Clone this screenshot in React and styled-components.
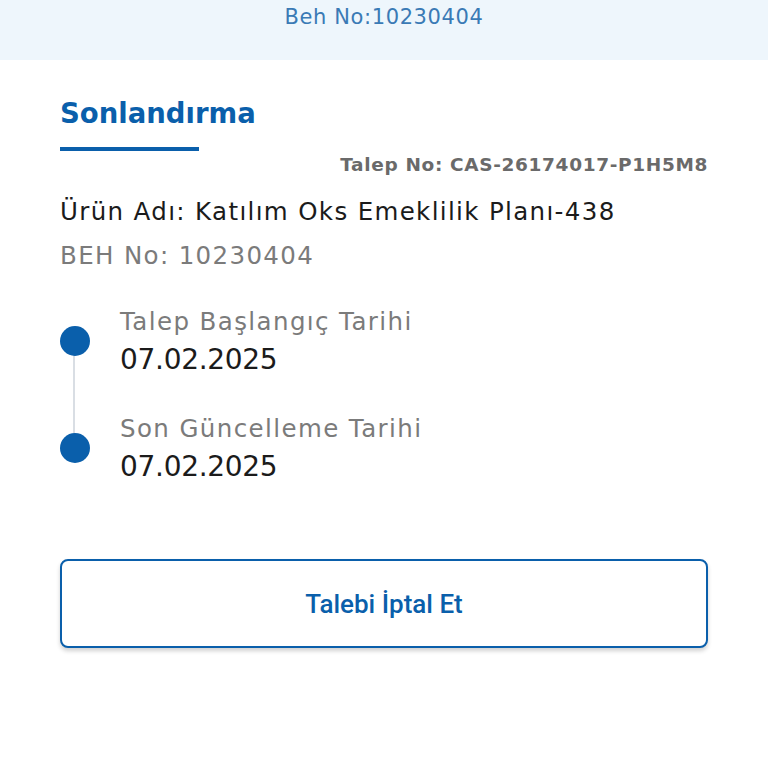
import React from 'react';
import styled, { createGlobalStyle } from 'styled-components';

const colors = {
    primary: '#0a5fab',
    headerBg: '#eef6fc',
    headerText: '#3a7ab5',
    text: '#1b1b1b',
    muted: '#7b7b7b',
    line: '#d9dee4',
};

const GlobalStyle = createGlobalStyle`
    html, body {
        margin: 0;
        padding: 0;
        background: #ffffff;
        font-family: "DejaVu Sans", "Noto Sans", sans-serif;
    }
`;

const Page = styled.div`
    width: 768px;
    height: 768px;
    overflow: hidden;
    background: #ffffff;
`;

const Header = styled.header`
    height: 60px;
    background: ${colors.headerBg};
    display: flex;
    justify-content: center;
    align-items: flex-start;
`;

const HeaderText = styled.span`
    margin-top: 3px;
    color: ${colors.headerText};
    font-size: 21px;
    letter-spacing: 0.6px;
    line-height: 28px;
`;

const Content = styled.main`
    padding: 34px 60px 0;
    display: flex;
    flex-direction: column;
`;

const Title = styled.h1`
    margin: 0;
    color: ${colors.primary};
    font-size: 27.5px;
    font-weight: 600;
    line-height: 38px;
`;

const TitleBar = styled.div`
    width: 139px;
    height: 4px;
    margin-top: 15px;
    background: ${colors.primary};
`;

const CaseNo = styled.div`
    align-self: flex-end;
    margin-top: 1px;
    color: #6a6a6a;
    font-size: 18.5px;
    font-weight: 600;
    letter-spacing: 0.65px;
    line-height: 26px;
`;

const InfoLine = styled.div`
    color: ${({ $muted }) => ($muted ? colors.muted : colors.text)};
    font-size: 24.5px;
    letter-spacing: 1.35px;
    line-height: 44px;
`;

const Products = styled.div`
    margin-top: 12px;
`;

const Timeline = styled.ul`
    list-style: none;
    margin: 26px 0 0;
    padding: 0;
    position: relative;
`;

const Step = styled.li`
    display: flex;
    align-items: center;
    gap: 30px;
    position: relative;
    margin-bottom: ${({ $last }) => ($last ? '0' : '31px')};

    &::after {
        content: '';
        display: ${({ $last }) => ($last ? 'none' : 'block')};
        position: absolute;
        left: 13px;
        top: 50%;
        width: 2px;
        height: 107px;
        background: ${colors.line};
    }
`;

const Dot = styled.span`
    flex: none;
    width: 30px;
    height: 30px;
    border-radius: 50%;
    background: ${colors.primary};
    position: relative;
    z-index: 1;
    margin-top: -2px;
`;

const StepText = styled.div`
    display: flex;
    flex-direction: column;
`;

const StepLabel = styled.span`
    color: ${colors.muted};
    font-size: 24.5px;
    letter-spacing: 1.4px;
    line-height: 36px;
`;

const StepDate = styled.span`
    color: ${colors.text};
    font-size: 28px;
    letter-spacing: -0.3px;
    line-height: 40px;
`;

const CancelButton = styled.button`
    margin-top: 72px;
    height: 89px;
    border: 2px solid ${colors.primary};
    border-radius: 8px;
    background: #ffffff;
    box-shadow: 0 3px 4px rgba(0, 0, 0, 0.18);
    color: ${colors.primary};
    font-family: Roboto, "Liberation Sans", sans-serif;
    font-size: 26px;
    font-weight: 500;
    cursor: pointer;
`;

const steps = [
    { label: 'Talep Başlangıç Tarihi', date: '07.02.2025' },
    { label: 'Son Güncelleme Tarihi', date: '07.02.2025' },
];

function App() {
    return (
        <Page>
            <GlobalStyle />
            <Header>
                <HeaderText>Beh No:10230404</HeaderText>
            </Header>
            <Content>
                <Title>Sonlandırma</Title>
                <TitleBar />
                <CaseNo>Talep No: CAS-26174017-P1H5M8</CaseNo>
                <Products>
                    <InfoLine>Ürün Adı: Katılım Oks Emeklilik Planı-438</InfoLine>
                    <InfoLine $muted>BEH No: 10230404</InfoLine>
                </Products>
                <Timeline>
                    {steps.map((step, i) => (
                        <Step key={step.label} $last={i === steps.length - 1}>
                            <Dot />
                            <StepText>
                                <StepLabel>{step.label}</StepLabel>
                                <StepDate>{step.date}</StepDate>
                            </StepText>
                        </Step>
                    ))}
                </Timeline>
                <CancelButton>Talebi İptal Et</CancelButton>
            </Content>
        </Page>
    );
}

export default App;
